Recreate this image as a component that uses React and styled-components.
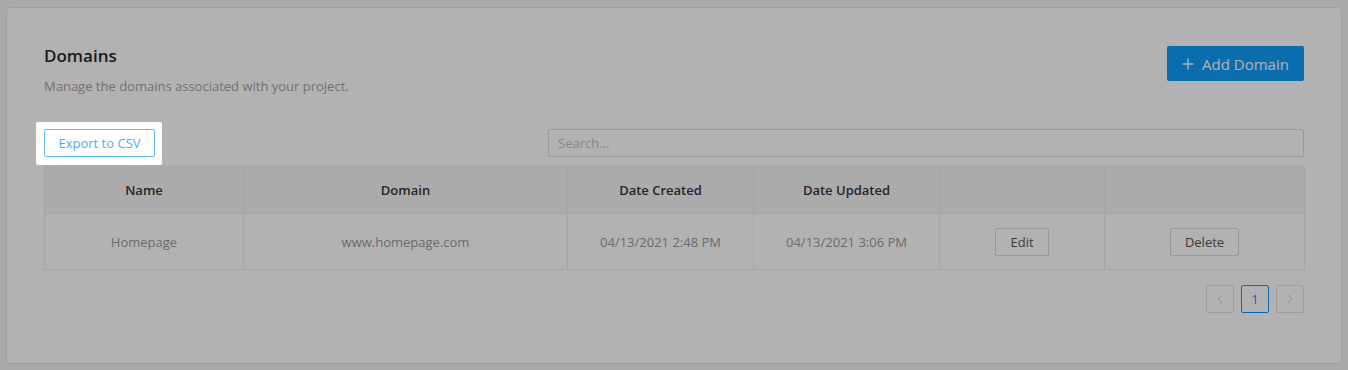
import styled, { createGlobalStyle } from "styled-components";

const GlobalStyle = createGlobalStyle`
html, body {
    margin: 0;
    min-height: 100%;
    background: #f1f3f4;
    font-family: "Open Sans", "Liberation Sans", sans-serif;
}
`

const rows = [
    { name: "Homepage", domain: "www.homepage.com", created: "04/13/2021 2:48 PM", updated: "04/13/2021 3:06 PM" }
]

const colWidths = [199, 324, 186, 186, 165, 200]

const App = () => {
    return (
        <Page>
            <GlobalStyle />
            <Card>
                <Header>
                    <div>
                        <Title>Domains</Title>
                        <Subtitle>Manage the domains associated with your project.</Subtitle>
                    </div>
                    <PrimaryButton>
                        <svg width="12" height="12" viewBox="0 0 12 12">
                            <path d="M6 0.5v11M0.5 6h11" stroke="currentColor" strokeWidth="1.4" fill="none" />
                        </svg>
                        Add Domain
                    </PrimaryButton>
                </Header>

                <Toolbar>
                    <Spotlight>
                        <OutlineButton>Export to CSV</OutlineButton>
                    </Spotlight>
                    <Search placeholder="Search..." />
                </Toolbar>

                <Table>
                    <colgroup>
                        {colWidths.map((w, i) => <col key={i} style={{ width: w }} />)}
                    </colgroup>
                    <thead>
                        <tr>
                            <Th>Name</Th>
                            <Th>Domain</Th>
                            <Th>Date Created</Th>
                            <Th>Date Updated</Th>
                            <Th />
                            <Th />
                        </tr>
                    </thead>
                    <tbody>
                        {rows.map((r) => (
                            <tr key={r.name}>
                                <Td>{r.name}</Td>
                                <Td>{r.domain}</Td>
                                <Td>{r.created}</Td>
                                <Td>{r.updated}</Td>
                                <Td><SmallButton>Edit</SmallButton></Td>
                                <Td><SmallButton>Delete</SmallButton></Td>
                            </tr>
                        ))}
                    </tbody>
                </Table>

                <Pagination>
                    <PageItem>
                        <svg width="6" height="10" viewBox="0 0 6 10">
                            <path d="M5 1L1 5l4 4" stroke="currentColor" strokeWidth="1" fill="none" />
                        </svg>
                    </PageItem>
                    <PageItem active>1</PageItem>
                    <PageItem>
                        <svg width="6" height="10" viewBox="0 0 6 10">
                            <path d="M1 1l4 4-4 4" stroke="currentColor" strokeWidth="1" fill="none" />
                        </svg>
                    </PageItem>
                </Pagination>
            </Card>
        </Page>
    )
}

const Page = styled.div`
padding: 7px 6px 6px 6px;
`
const Card = styled.div`
height: 357px;
box-sizing: border-box;
background: #fff;
border: 1px solid #e4e4e4;
border-radius: 4px;
padding: 38px 37px 0 37px;
`
const Header = styled.div`
display: flex;
justify-content: space-between;
align-items: flex-start;
`
const Title = styled.h2`
margin: 0;
font-size: 17px;
line-height: 20px;
font-weight: 600;
color: #282828;
`
const Subtitle = styled.p`
margin: 11px 0 0;
font-size: 13px;
line-height: 18px;
color: #a4a4a4;
`
const PrimaryButton = styled.button`
display: flex;
align-items: center;
gap: 8px;
height: 35px;
width: 137px;
justify-content: center;
border: none;
border-radius: 2px;
background: #0f9cf8;
color: #fff;
font-family: inherit;
font-size: 15px;
`
const Toolbar = styled.div`
display: flex;
justify-content: space-between;
align-items: center;
margin-top: 34px;
`
const Spotlight = styled.div`
position: relative;
display: flex;

&::after {
    content: "";
    position: absolute;
    top: -7px;
    left: -8px;
    right: -7px;
    bottom: -8px;
    border-radius: 2px;
    box-shadow: 0 0 0 1600px rgba(0, 0, 0, 0.3);
    pointer-events: none;
    z-index: 10;
}
`
const OutlineButton = styled.button`
width: 111px;
height: 28px;
background: #fff;
border: 1px solid #5cbcfa;
border-radius: 2px;
color: #45aff6;
font-family: inherit;
font-size: 13px;
`
const Search = styled.input`
width: 756px;
height: 28px;
box-sizing: border-box;
border: 1px solid #dcdcdc;
border-radius: 2px;
padding: 0 9px;
font-family: inherit;
font-size: 13px;
outline: none;

&::placeholder {
    color: #c4c4c4;
}
`
const Table = styled.table`
width: 100%;
margin-top: 9px;
border-collapse: collapse;
table-layout: fixed;
border: 1px solid #ececec;
`
const Th = styled.th`
height: 46px;
padding: 0;
background: #f5f5f5;
border: 1px solid #ececec;
font-size: 13px;
font-weight: 600;
color: #363636;
text-align: center;
`
const Td = styled.td`
height: 55px;
padding: 0;
border: 1px solid #ececec;
font-size: 13px;
color: #9a9a9a;
text-align: center;
`
const SmallButton = styled.button`
height: 28px;
padding: 0 14px;
background: #fff;
border: 1px solid #d8d8d8;
border-radius: 2px;
font-family: inherit;
font-size: 13px;
color: #555;
`
const Pagination = styled.div`
display: flex;
justify-content: flex-end;
gap: 7px;
margin-top: 15px;
`
const PageItem = styled.div`
width: 28px;
height: 28px;
box-sizing: border-box;
display: flex;
align-items: center;
justify-content: center;
border: 1px solid ${props => props.active ? "#1890ff" : "#e2e2e2"};
border-radius: 2px;
color: ${props => props.active ? "#1890ff" : "#d0d0d0"};
font-size: 13px;
`

export default App;
